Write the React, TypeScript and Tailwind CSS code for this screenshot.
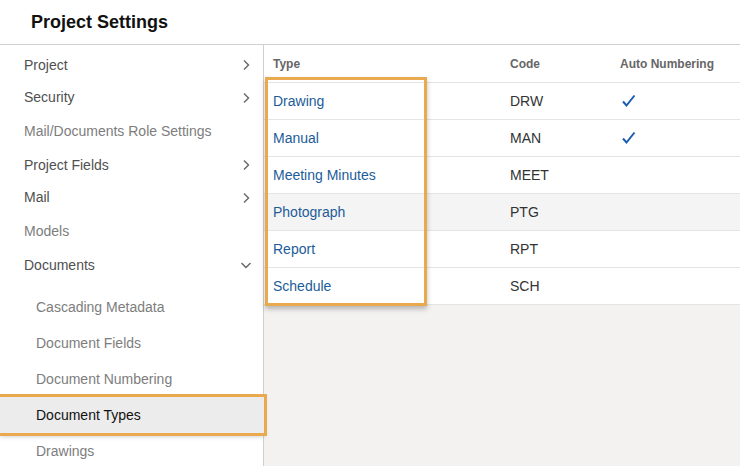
import React from "react";

const F = { fontFamily: '"Liberation Sans", Arial, sans-serif' };

function ChevronRight() {
  return (
    <svg width="10" height="14" viewBox="0 0 10 14" className="text-[#666]">
      <path d="M3 2.5 L7.5 7 L3 11.5" fill="none" stroke="currentColor" strokeWidth="1.4" />
    </svg>
  );
}
function ChevronDown() {
  return (
    <svg width="14" height="10" viewBox="0 0 14 10" className="text-[#666]">
      <path d="M2.5 3 L7 7.5 L11.5 3" fill="none" stroke="currentColor" strokeWidth="1.4" />
    </svg>
  );
}
function Check() {
  return (
    <svg width="16" height="14" viewBox="0 0 16 14" className="text-[#1a5db0]">
      <path d="M2 7.5 L5.5 11.5 L13.5 1.5" fill="none" stroke="currentColor" strokeWidth="2" />
    </svg>
  );
}

type Item = { label: string; h: string; chev?: boolean; light?: boolean };
const items: Item[] = [
  { label: "Project", h: "h-[32px]", chev: true },
  { label: "Security", h: "h-[33px]", chev: true },
  { label: "Mail/Documents Role Settings", h: "h-[35px]", light: true },
  { label: "Project Fields", h: "h-[32px]", chev: true },
  { label: "Mail", h: "h-[33px]", chev: true },
  { label: "Models", h: "h-[34px]", light: true },
];

const subs = ["Cascading Metadata", "Document Fields", "Document Numbering", "Document Types", "Drawings"];

const rows = [
  { t: "Drawing", c: "DRW", a: true },
  { t: "Manual", c: "MAN", a: true },
  { t: "Meeting Minutes", c: "MEET", a: false },
  { t: "Photograph", c: "PTG", a: false, hl: true },
  { t: "Report", c: "RPT", a: false },
  { t: "Schedule", c: "SCH", a: false },
];

export default function App() {
  return (
    <div style={F} className="w-[740px] h-[466px] overflow-hidden bg-white flex flex-col">
      <div className="h-[45px] shrink-0 border-b border-[#d0d0d0] flex items-center pl-[31px]">
        <span className="text-[18px] font-bold text-[#111] mt-[1px]">Project Settings</span>
      </div>
      <div className="flex flex-1 min-h-0">
        <div className="w-[264px] shrink-0 border-r border-[#cfcfcf] pt-[4px] relative">
          {items.map((it) => (
            <div key={it.label} className={`${it.h} flex items-center justify-between pl-[24px] pr-[12px]`}>
              <span className={`text-[14px] ${it.light ? "text-[#7d7d7d]" : "text-[#4f4f4f]"}`}>{it.label}</span>
              {it.chev && <ChevronRight />}
            </div>
          ))}
          <div className="h-[34px] flex items-center justify-between pl-[24px] pr-[10px]">
            <span className="text-[14px] text-[#4f4f4f]">Documents</span>
            <ChevronDown />
          </div>
          <div className="pt-[7px]">
            {subs.map((s) => (
              <div
                key={s}
                className={`h-[36px] flex items-center pl-[36px] text-[14px] ${
                  s === "Document Types"
                    ? "bg-[#ececec] text-[#111] relative -mr-[1px] outline-[3px] outline-[#e8a94f] outline shadow-[0_3px_5px_rgba(0,0,0,0.25)] z-10"
                    : "text-[#7d7d7d]"
                }`}
              >
                {s}
              </div>
            ))}
          </div>
        </div>
        <div className="flex-1 bg-[#f3f2f1] relative">
          <div className="bg-white">
            <div className="h-[38px] flex items-center border-b border-[#e4e4e4] text-[12px] font-bold text-[#666] pt-[1px]">
              <div className="w-[246px] pl-[9px]">Type</div>
              <div className="w-[110px]">Code</div>
              <div>Auto Numbering</div>
            </div>
            {rows.map((r) => (
              <div
                key={r.t}
                className={`h-[37px] flex items-center border-b border-[#e4e4e4] text-[14px] ${r.hl ? "bg-[#f4f4f4]" : ""}`}
              >
                <div className="w-[246px] pl-[9px] text-[#1c5c99]">{r.t}</div>
                <div className="w-[110px] text-[#333]">{r.c}</div>
                <div className="pl-[1px]">{r.a && <Check />}</div>
              </div>
            ))}
          </div>
          <div className="absolute left-[1px] top-[32px] w-[162px] h-[229px] border-[3px] border-[#e8a94f] shadow-[0_3px_5px_rgba(0,0,0,0.25)] pointer-events-none" />
        </div>
      </div>
    </div>
  );
}
